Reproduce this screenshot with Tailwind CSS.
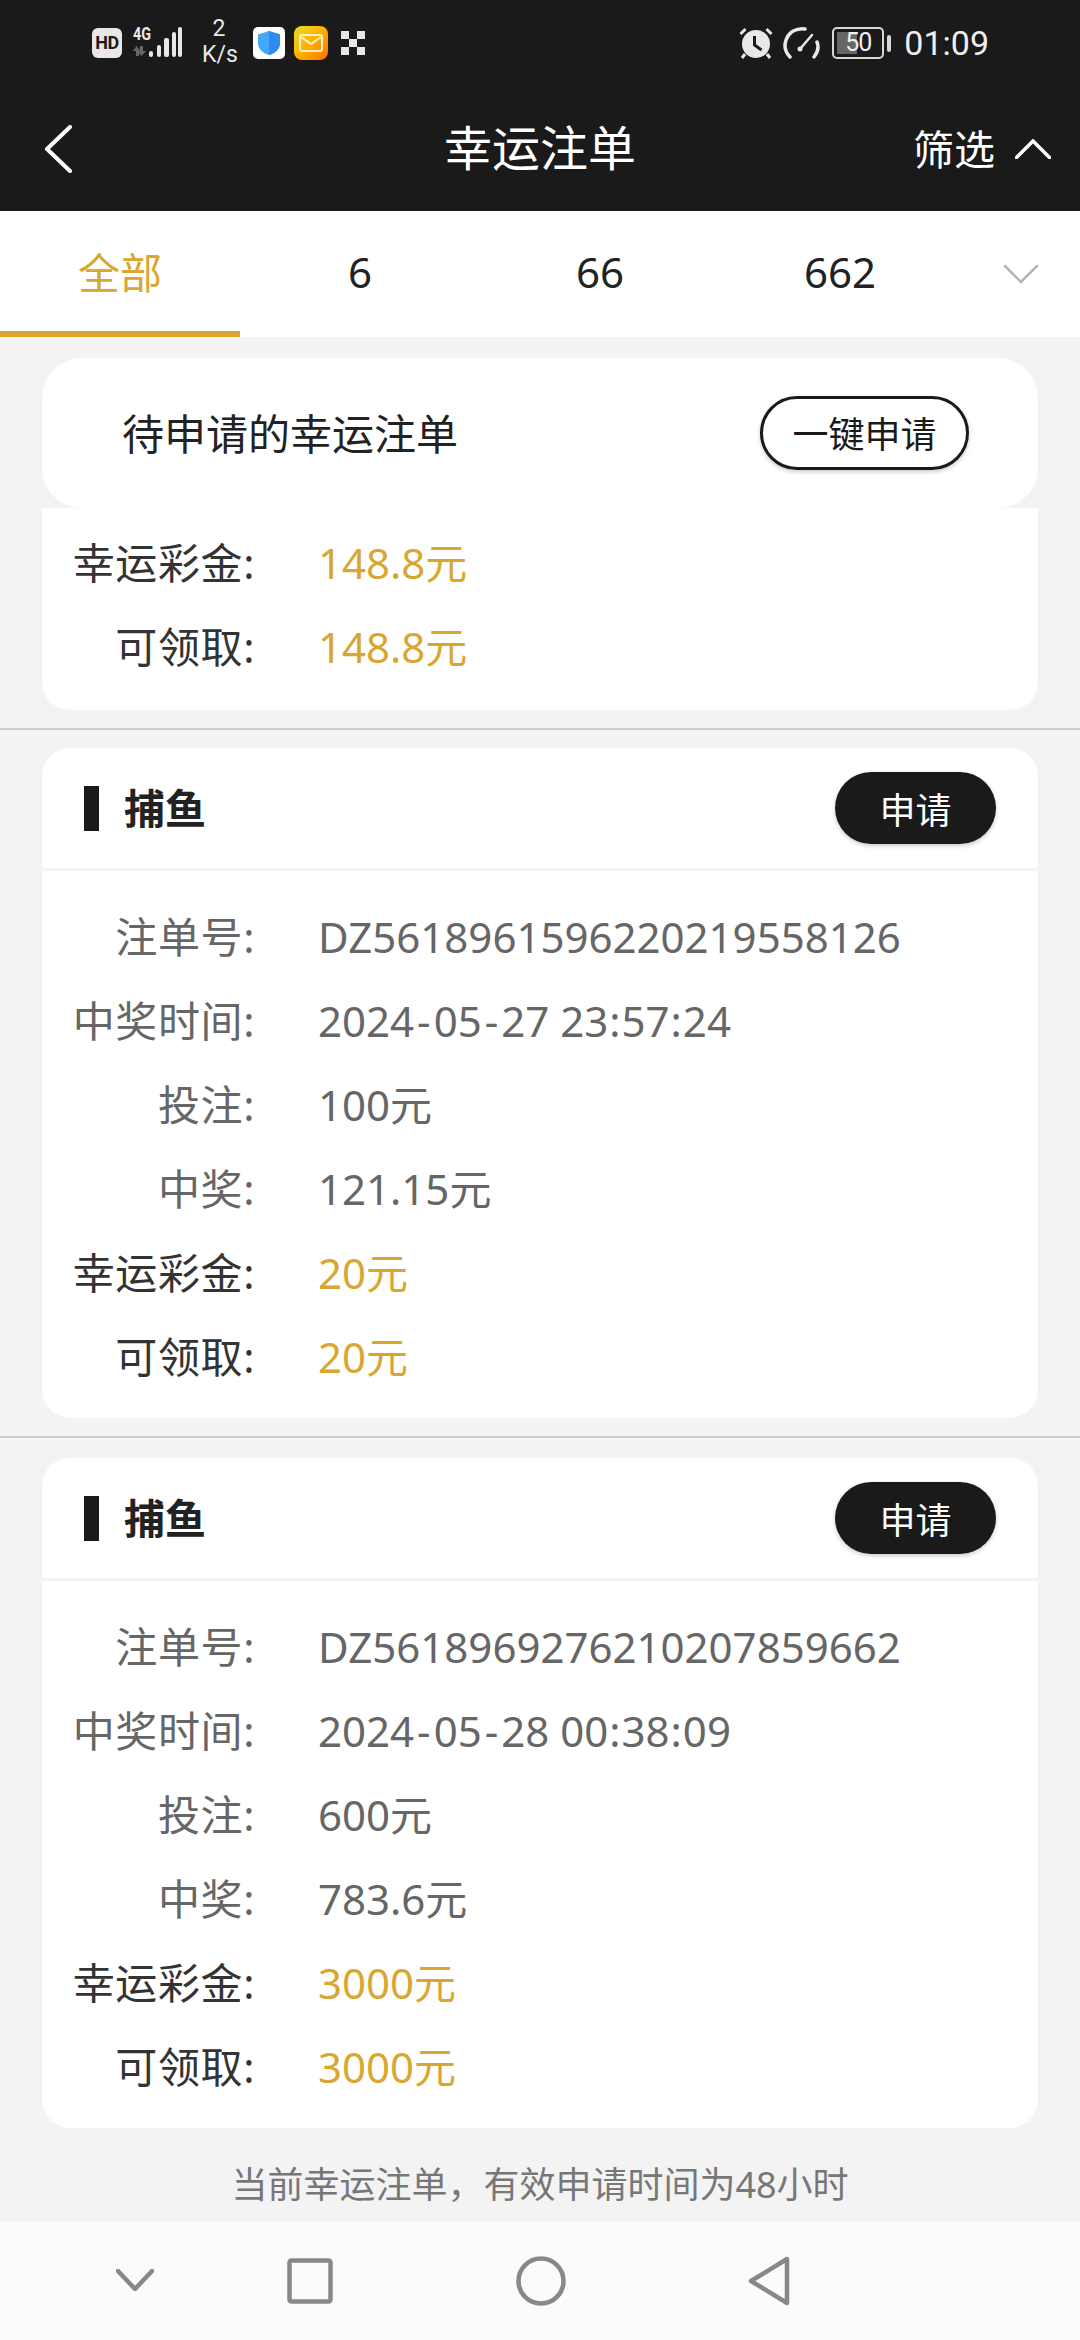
<!DOCTYPE html>
<html lang="zh-CN">
<head>
    <meta charset="UTF-8">
    <meta name="viewport" content="width=device-width, initial-scale=1.0">
    <title>幸运注单</title>
    <script src="https://cdn.jsdelivr.net/npm/@tailwindcss/browser@4"></script>
</head>
<body class="bg-[#f3f3f3]">
    <div class="w-[1080px] h-[2340px] overflow-hidden flex flex-col font-['Noto_Sans','Noto_Sans_CJK_SC',sans-serif]">
        <!-- Header -->
        <header class="h-[211px] shrink-0 bg-[#1a1a1a] text-white">
            <!-- Status bar -->
            <div class="h-[86px] flex items-center justify-between pl-[92px] pr-[91px] text-[#e8e8e8] font-[Roboto,sans-serif]">
                <div class="flex items-center">
                    <div class="w-[30px] h-[30px] rounded-[6px] bg-[#e8e8e8] text-[#1a1a1a] text-[18px] leading-[30px] font-bold text-center tracking-[-0.5px]">HD</div>
                    <div class="ml-[11px] w-[50px] h-[32px] relative">
                        <span class="absolute left-0 top-[-2px] text-[18px] leading-[18px] font-bold scale-x-[0.8] origin-left">4G</span>
                        <svg class="absolute left-0 top-0" width="50" height="32" viewBox="0 0 50 32">
                            <path d="M0 24l3.500-5 2.500 3.500V29H3v-5zM7 19h3v5l3 0-4.500 5L6 26z" fill="#666"/>
                            <rect x="16" y="24" width="4" height="6" rx="2" fill="#e8e8e8"/>
                            <rect x="24" y="18" width="4" height="12" rx="2" fill="#e8e8e8"/>
                            <rect x="31" y="11" width="5" height="19" rx="2" fill="#e8e8e8"/>
                            <rect x="39" y="5" width="4" height="25" rx="2" fill="#e8e8e8"/>
                            <rect x="45" y="0" width="4" height="30" rx="2" fill="#e8e8e8"/>
                        </svg>
                    </div>
                    <div class="ml-[19px] w-[34px] text-center text-[23px] leading-[26px] pb-[2px]">2<br>K/s</div>
                    <div class="ml-[17px] w-[32px] h-[32px] rounded-[5px] bg-white flex items-center justify-center">
                        <svg width="24" height="26" viewBox="0 0 24 26">
                            <path d="M12 1l11 3.500V13c0 6-4.500 10-11 12C5.500 23 1 19 1 13V4.500z" fill="#45a8f7"/>
                            <path d="M12 1l11 3.500V13c0 6-4.500 10-11 12z" fill="#2f8bf0"/>
                        </svg>
                    </div>
                    <div class="ml-[9px] w-[34px] h-[34px] rounded-[8px] bg-gradient-to-br from-[#e8dc20] via-[#ffb000] to-[#ff6a00] flex items-center justify-center">
                        <svg width="24" height="18" viewBox="0 0 24 18" fill="none" stroke="#fff2c0" stroke-width="2">
                            <rect x="1" y="1" width="22" height="16" rx="2"/>
                            <path d="M2 3l10 7 10-7"/>
                        </svg>
                    </div>
                    <svg class="ml-[13px]" width="24" height="24" viewBox="0 0 24 24" fill="#e8e8e8">
                        <rect x="0" y="0" width="8" height="8"/>
                        <rect x="16" y="0" width="8" height="8"/>
                        <rect x="8" y="8" width="8" height="8"/>
                        <rect x="0" y="16" width="8" height="8"/>
                        <rect x="16" y="16" width="8" height="8"/>
                    </svg>
                </div>
                <div class="flex items-center">
                    <svg width="34" height="32" viewBox="0 0 34 32">
                        <circle cx="17" cy="17" r="14" fill="#e8e8e8"/>
                        <path d="M15.500 9v9l7 5" fill="none" stroke="#1a1a1a" stroke-width="3"/>
                        <path d="M1.500 7l5-5M32.500 7l-5-5M6 27l-3 4M28 27l3 4" stroke="#e8e8e8" stroke-width="3" fill="none"/>
                    </svg>
                    <svg class="ml-[10px]" width="38" height="34" viewBox="0 0 38 34" fill="none" stroke="#e8e8e8" stroke-width="3.500" stroke-linecap="round">
                        <path d="M7 31C2 26 1 20 3 14 6 6 13 2 22 3"/>
                        <path d="M34 16c2 5 1 10-3 15"/>
                        <path d="M17 23l12-14" stroke-width="2.500"/>
                        <circle cx="17" cy="23" r="2.500" fill="#e8e8e8" stroke="none"/>
                    </svg>
                    <div class="ml-[11px] w-[52px] h-[32px] rounded-[5px] border-[2px] border-[#d8d8d8] relative overflow-hidden">
                        <div class="absolute left-[3px] top-[3px] bottom-[3px] w-[20px] bg-[#666]"></div>
                        <div class="absolute inset-0 text-center text-[25px] leading-[28px] tracking-[-1px] text-[#eee]">50</div>
                    </div>
                    <div class="ml-[3px] w-[4px] h-[17px] rounded-[2px] bg-[#d8d8d8]"></div>
                    <div class="ml-[13px] text-[34px] leading-[40px] text-[#eee]">01:09</div>
                </div>
            </div>
            <!-- Title bar -->
            <div class="h-[125px] grid grid-cols-[1fr_auto_1fr] items-center">
                <svg class="ml-[44px]" width="28" height="48" viewBox="0 0 28 48" fill="none" stroke="#fff" stroke-width="4" stroke-linecap="round" stroke-linejoin="round">
                    <path d="M26 2L3 24l23 22"/>
                </svg>
                <h1 class="text-[48px] leading-[60px] font-normal pb-[2px]">幸运注单</h1>
                <div class="flex items-center justify-end pr-[29px]">
                    <span class="text-[41px] leading-[50px] pt-[1px]">筛选</span>
                    <svg class="ml-[20px]" width="36" height="20" viewBox="0 0 36 20" fill="none" stroke="#fff" stroke-width="3.500" stroke-linecap="round">
                        <path d="M1 19L18 2l17 17"/>
                    </svg>
                </div>
            </div>
        </header>

        <!-- Tabs -->
        <nav class="h-[126px] shrink-0 bg-white grid grid-cols-[240px_240px_240px_240px_120px] text-[42px] text-[#222]">
            <div class="flex items-center justify-center border-b-[6px] border-[#d8a732] text-[#d8a732] pt-[2px]">全部</div>
            <div class="flex items-center justify-center pb-[5px]">6</div>
            <div class="flex items-center justify-center pb-[5px]">66</div>
            <div class="flex items-center justify-center pb-[5px]">662</div>
            <div class="flex items-center justify-center pl-[2px]">
                <svg width="34" height="20" viewBox="0 0 34 20" fill="none" stroke="#b5b5b5" stroke-width="2.500" stroke-linecap="round">
                    <path d="M1 2l16 16L33 2"/>
                </svg>
            </div>
        </nav>

        <!-- List -->
        <main class="flex-1 pt-[21px]">
            <div class="mx-[42px] h-[150px] rounded-[40px] bg-white flex items-center justify-between pl-[80px] pr-[69px]">
                <h2 class="text-[42px] font-normal text-[#222] pt-[1px]">待申请的幸运注单</h2>
                <button class="w-[209px] h-[74px] rounded-full bg-white border-[3px] border-[#1a1a1a] text-[36px] text-[#1a1a1a] pt-[3px] shadow-[0_2px_4px_rgba(0,0,0,0.2)]">一键申请</button>
            </div>
            <div class="mx-[42px] h-[202px] rounded-b-[28px] bg-white pt-[13px] text-[42px] leading-[84px]">
                <div class="flex"><span class="w-[213px] text-right tracking-[0.6px] text-[#333]">幸运彩金:</span><span class="ml-[63px] text-[#d8a732]">148.8元</span></div>
                <div class="flex"><span class="w-[213px] text-right tracking-[0.6px] text-[#333]">可领取:</span><span class="ml-[63px] text-[#d8a732]">148.8元</span></div>
            </div>
            <div class="mt-[18px] h-[2px] bg-[#cccccc]"></div>

            <!-- Card 1 -->
            <section class="mt-[18px] mx-[42px] h-[670px] rounded-[28px] bg-white">
                <div class="h-[123px] border-b-[3px] border-[#f3f3f3] flex items-center justify-between pl-[42px] pr-[42px]">
                    <div class="flex items-center">
                        <div class="w-[15px] h-[45px] bg-[#1a1a1a]"></div>
                        <h3 class="ml-[25px] text-[41px] font-bold text-[#222] pt-[2px]">捕鱼</h3>
                    </div>
                    <button class="w-[161px] h-[72px] rounded-full bg-[#1a1a1a] text-white text-[36px] pt-[5px] shadow-[0_2px_4px_rgba(0,0,0,0.2)]">申请</button>
                </div>
                <div class="pt-[24px] text-[42px] leading-[84px]">
                    <div class="flex"><span class="w-[213px] text-right tracking-[0.6px] text-[#666]">注单号:</span><span class="ml-[63px] text-[#666]">DZ5618961596220219558126</span></div>
                    <div class="flex"><span class="w-[213px] text-right tracking-[0.6px] text-[#666]">中奖时间:</span><span class="ml-[63px] text-[#666]">2024<span class="mx-[3px]">-</span>05<span class="mx-[3px]">-</span>27 23<span class="mx-[1px]">:</span>57<span class="mx-[1px]">:</span>24</span></div>
                    <div class="flex"><span class="w-[213px] text-right tracking-[0.6px] text-[#666]">投注:</span><span class="ml-[63px] text-[#666]">100元</span></div>
                    <div class="flex"><span class="w-[213px] text-right tracking-[0.6px] text-[#666]">中奖:</span><span class="ml-[63px] text-[#666]">121.15元</span></div>
                    <div class="flex"><span class="w-[213px] text-right tracking-[0.6px] text-[#333]">幸运彩金:</span><span class="ml-[63px] text-[#d8a732]">20元</span></div>
                    <div class="flex"><span class="w-[213px] text-right tracking-[0.6px] text-[#333]">可领取:</span><span class="ml-[63px] text-[#d8a732]">20元</span></div>
                </div>
            </section>
            <div class="mt-[18px] h-[2px] bg-[#cccccc]"></div>

            <!-- Card 2 -->
            <section class="mt-[20px] mx-[42px] h-[670px] rounded-[28px] bg-white">
                <div class="h-[123px] border-b-[3px] border-[#f3f3f3] flex items-center justify-between pl-[42px] pr-[42px]">
                    <div class="flex items-center">
                        <div class="w-[15px] h-[45px] bg-[#1a1a1a]"></div>
                        <h3 class="ml-[25px] text-[41px] font-bold text-[#222] pt-[2px]">捕鱼</h3>
                    </div>
                    <button class="w-[161px] h-[72px] rounded-full bg-[#1a1a1a] text-white text-[36px] pt-[5px] shadow-[0_2px_4px_rgba(0,0,0,0.2)]">申请</button>
                </div>
                <div class="pt-[24px] text-[42px] leading-[84px]">
                    <div class="flex"><span class="w-[213px] text-right tracking-[0.6px] text-[#666]">注单号:</span><span class="ml-[63px] text-[#666]">DZ5618969276210207859662</span></div>
                    <div class="flex"><span class="w-[213px] text-right tracking-[0.6px] text-[#666]">中奖时间:</span><span class="ml-[63px] text-[#666]">2024<span class="mx-[3px]">-</span>05<span class="mx-[3px]">-</span>28 00<span class="mx-[1px]">:</span>38<span class="mx-[1px]">:</span>09</span></div>
                    <div class="flex"><span class="w-[213px] text-right tracking-[0.6px] text-[#666]">投注:</span><span class="ml-[63px] text-[#666]">600元</span></div>
                    <div class="flex"><span class="w-[213px] text-right tracking-[0.6px] text-[#666]">中奖:</span><span class="ml-[63px] text-[#666]">783.6元</span></div>
                    <div class="flex"><span class="w-[213px] text-right tracking-[0.6px] text-[#333]">幸运彩金:</span><span class="ml-[63px] text-[#d8a732]">3000元</span></div>
                    <div class="flex"><span class="w-[213px] text-right tracking-[0.6px] text-[#333]">可领取:</span><span class="ml-[63px] text-[#d8a732]">3000元</span></div>
                </div>
            </section>

            <p class="mt-[33px] text-center text-[36px] leading-[48px] text-[#777]">当前幸运注单，有效申请时间为48小时</p>
        </main>

        <!-- System navigation -->
        <footer class="h-[118px] shrink-0 bg-[#fbfbfb]">
            <div class="h-full flex items-center">
                <svg class="ml-[116px] mb-[2px]" width="38" height="22" viewBox="0 0 38 22" fill="none" stroke="#888" stroke-width="4.500" stroke-linecap="round" stroke-linejoin="round">
                    <path d="M2 2l17 18L36 2"/>
                </svg>
                <svg class="ml-[133px]" width="46" height="46" viewBox="0 0 46 46" fill="none" stroke="#888" stroke-width="4.500">
                    <rect x="2.500" y="2.500" width="41" height="41" rx="2"/>
                </svg>
                <svg class="ml-[183px]" width="50" height="50" viewBox="0 0 50 50" fill="none" stroke="#888" stroke-width="4.500">
                    <circle cx="25" cy="25" r="22.500"/>
                </svg>
                <svg class="ml-[182px]" width="42" height="50" viewBox="0 0 42 50" fill="none" stroke="#888" stroke-width="4.500" stroke-linejoin="round">
                    <path d="M39 3v44L3 25z"/>
                </svg>
            </div>
        </footer>
    </div>
</body>
</html>
